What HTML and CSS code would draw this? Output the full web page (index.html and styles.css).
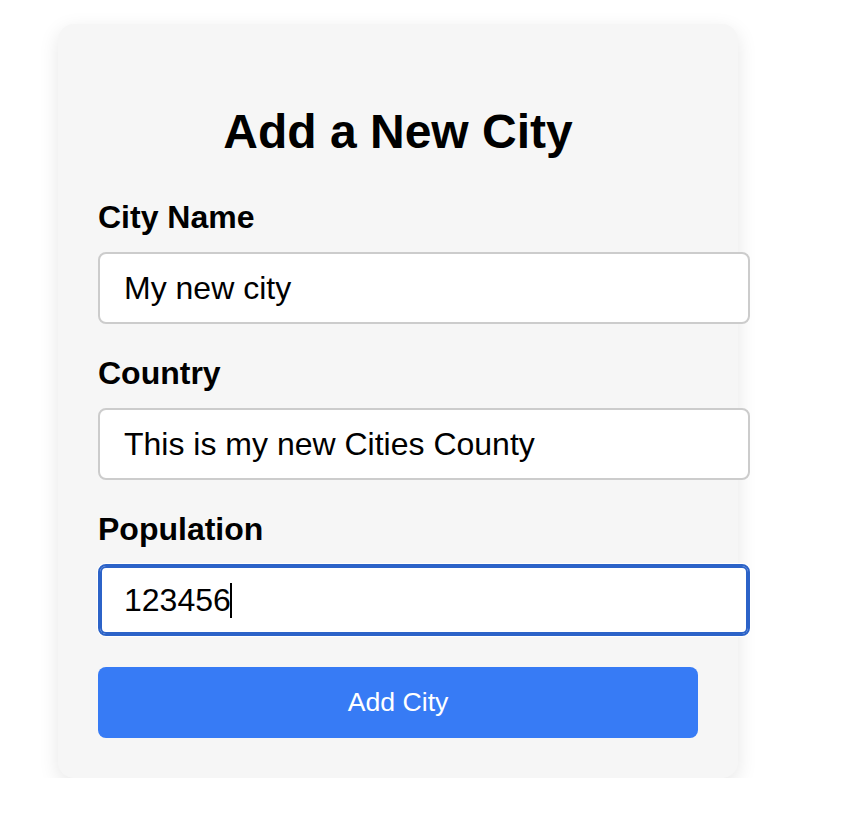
FILE: index.html
```html
<!DOCTYPE html>
<html lang="en">
<head>
<meta charset="utf-8">
<title>Add a New City</title>
<link rel="stylesheet" href="styles.css">
</head>
<body>
<form class="card">
  <h2 class="title">Add a New City</h2>
  <label class="label" for="city">City Name</label>
  <input class="field" id="city" type="text" value="My new city">
  <label class="label" for="country">Country</label>
  <input class="field" id="country" type="text" value="This is my new Cities County">
  <label class="label" for="population">Population</label>
  <div class="field-wrap">
    <input class="field focused" id="population" type="text" value="123456">
    <span class="caret"></span>
  </div>
  <button class="submit" type="button">Add City</button>
</form>
</body>
</html>
```

FILE: styles.css
```css
html, body {
  margin: 0;
  padding: 0;
  background: #ffffff;
}

body {
  font-family: "Liberation Sans", Arial, Helvetica, sans-serif;
  color: #000;
}

.card {
  width: 600px;
  margin: 24px 0 0 58px;
  padding: 40px;
  background: #f6f6f6;
  border-radius: 16px;
  box-shadow: 0 6px 20px rgba(0, 0, 0, 0.1);
  display: flex;
  flex-direction: column;
  align-items: flex-start;
}

.title {
  align-self: stretch;
  text-align: center;
  font-size: 48px;
  font-weight: bold;
  margin: 40px 0 40px;
  line-height: normal;
}

.label {
  display: block;
  font-size: 32px;
  font-weight: bold;
  margin: 0 0 16px;
}

.field {
  box-sizing: border-box;
  width: 652px;
  height: 72px;
  margin: 0 0 31px;
  padding: 0 24px;
  font-family: "Liberation Sans", Arial, Helvetica, sans-serif;
  font-size: 32px;
  color: #000;
  background: #fff;
  border: 2px solid #cccccc;
  border-radius: 8px;
  outline: none;
  flex-shrink: 0;
}

.field-wrap {
  position: relative;
  flex-shrink: 0;
  margin-bottom: 31px;
}

.field-wrap .field {
  display: block;
  margin-bottom: 0;
}

.focused {
  border-color: #2c63c8;
  box-shadow: inset 0 0 0 2px #2c63c8, 0 0 0 1px #ffffff;
}

.caret {
  position: absolute;
  left: 132px;
  top: 19px;
  width: 2px;
  height: 35px;
  background: #000;
}

.submit {
  width: 600px;
  height: 71px;
  padding: 0;
  border: none;
  border-radius: 8px;
  background: #377bf5;
  color: #fff;
  font-family: "Liberation Sans", Arial, Helvetica, sans-serif;
  font-size: 26.67px;
  cursor: pointer;
}
```
